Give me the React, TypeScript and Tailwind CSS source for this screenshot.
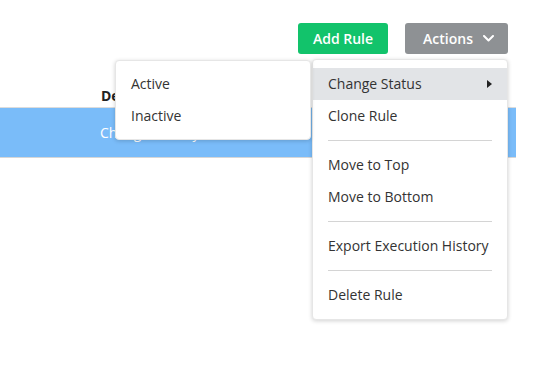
import React from "react";

const font = { fontFamily: '"Open Sans", "Noto Sans", sans-serif' };

export default function App() {
  return (
    <div className="relative w-[535px] h-[376px] bg-white overflow-hidden" style={font}>
      <div className="flex justify-end gap-[17px] pt-[23px] pr-[27px]">
        <button className="h-[31px] w-[90px] rounded-[3px] bg-[#12c36b] text-white text-[14px] font-semibold">
          Add Rule
        </button>
        <button className="h-[31px] w-[103px] rounded-[3px] bg-[#8e9194] text-white text-[14px] font-semibold flex items-center justify-center gap-[10px] pl-[4px]">
          <span>Actions</span>
          <svg width="11" height="7" viewBox="0 0 11 7" fill="none">
            <path d="M1 1l4.5 4.5L10 1" stroke="white" strokeWidth="2" strokeLinecap="round" strokeLinejoin="round" />
          </svg>
        </button>
      </div>

      <div className="w-[516px] mt-[31px]">
        <div className="h-[23px] border-b border-[#dcdcdc] pl-[101px] text-[14px] font-bold text-[#222] leading-[21px]">
          Description
        </div>
        <div className="h-[50px] bg-[#7abcf9] border-b border-[#d6d6d6] pl-[100px] text-[14px] text-white flex items-center">
          Change History
        </div>
      </div>

      <div className="absolute left-[312px] top-[59px] w-[196px] bg-white rounded-[4px] border border-[#e6e6e6] shadow-[0_1px_4px_rgba(0,0,0,0.18)] py-[8px] text-[14px] text-[#333]">
        <div className="h-[32px] bg-[#e2e4e7] flex items-center justify-between pl-[15px] pr-[15px] pb-[1px]">
          <span>Change Status</span>
          <svg width="5" height="8" viewBox="0 0 5 8">
            <path d="M0 0L5 4L0 8Z" fill="#222" />
          </svg>
        </div>
        <div className="h-[32px] flex items-center pl-[15px] pb-[1px]">Clone Rule</div>
        <div className="mx-[15px] my-[8px] border-t border-[#d4d4d4]" />
        <div className="h-[32px] flex items-center pl-[15px] pb-[1px]">Move to Top</div>
        <div className="h-[32px] flex items-center pl-[15px] pb-[1px]">Move to Bottom</div>
        <div className="mx-[15px] my-[8px] border-t border-[#d4d4d4]" />
        <div className="h-[32px] flex items-center pl-[15px] pb-[1px]">Export Execution History</div>
        <div className="mx-[15px] my-[8px] border-t border-[#d4d4d4]" />
        <div className="h-[32px] flex items-center pl-[15px] pb-[1px]">Delete Rule</div>
      </div>

      <div className="absolute left-[115px] top-[60px] w-[196px] bg-white rounded-[4px] border border-[#e6e6e6] shadow-[0_1px_4px_rgba(0,0,0,0.18)] py-[7px] text-[14px] text-[#333]">
        <div className="h-[32px] flex items-center pl-[15px] pb-[1px]">Active</div>
        <div className="h-[32px] flex items-center pl-[15px] pb-[1px]">Inactive</div>
      </div>
    </div>
  );
}
